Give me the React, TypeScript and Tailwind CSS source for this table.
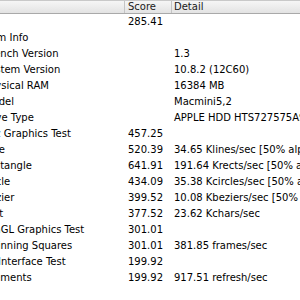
import React from "react";

type Row = { name: string; off: number; score: string; detail: string };

const rows: Row[] = [
  { name: "", off: 0, score: "285.41", detail: "" },
  { name: "System Info", off: -31, score: "", detail: "" },
  { name: "Xbench Version", off: -19, score: "", detail: "1.3" },
  { name: "System Version", off: -17, score: "", detail: "10.8.2 (12C60)" },
  { name: "Physical RAM", off: -17, score: "", detail: "16384 MB" },
  { name: "Model", off: -16, score: "", detail: "Macmini5,2" },
  { name: "Drive Type", off: -19, score: "", detail: "APPLE HDD HTS727575A9E362" },
  { name: "Quartz Graphics Test", off: -33, score: "457.25", detail: "" },
  { name: "Line", off: -16, score: "520.39", detail: "34.65 Klines/sec [50% alpha]" },
  { name: "Rectangle", off: -18, score: "641.91", detail: "191.64 Krects/sec [50% alpha]" },
  { name: "Circle", off: -18, score: "434.09", detail: "35.38 Kcircles/sec [50% alpha]" },
  { name: "Bezier", off: -17, score: "399.52", detail: "10.08 Kbeziers/sec [50% alpha]" },
  { name: "Text", off: -17, score: "377.52", detail: "23.62 Kchars/sec" },
  { name: "OpenGL Graphics Test", off: -26, score: "301.01", detail: "" },
  { name: "Spinning Squares", off: -15, score: "301.01", detail: "381.85 frames/sec" },
  { name: "User Interface Test", off: -28, score: "199.92", detail: "" },
  { name: "Elements", off: -15, score: "199.92", detail: "917.51 refresh/sec" },
];

export default function App() {
  return (
    <div className="w-[300px] h-[300px] bg-white overflow-hidden font-['DejaVu_Sans',sans-serif] text-[10px] text-black">
      <div className="flex h-[14px] border-t border-b border-t-[#c9c9c9] border-b-[#a9a9a9] bg-gradient-to-b from-[#f6f6f6] to-[#e3e3e3] leading-[12px] text-[#1a1a1a]">
        <div className="w-[125px] shrink-0 border-r border-[#c4c4c4]" />
        <div className="w-[47px] shrink-0 border-r border-[#c4c4c4] pl-[3px]">Score</div>
        <div className="flex-1 pl-[2px] whitespace-nowrap">Detail</div>
      </div>
      {rows.map((r, i) => (
        <div key={i} className="flex h-[16px] leading-[16px] whitespace-nowrap">
          <div className="w-[125px] shrink-0 overflow-hidden">
            <span className="inline-block" style={{ marginLeft: r.off }}>
              {r.name}
            </span>
          </div>
          <div className="w-[47px] shrink-0 pl-[3px]">{r.score}</div>
          <div className="flex-1 pl-[2px] overflow-hidden">{r.detail}</div>
        </div>
      ))}
    </div>
  );
}
